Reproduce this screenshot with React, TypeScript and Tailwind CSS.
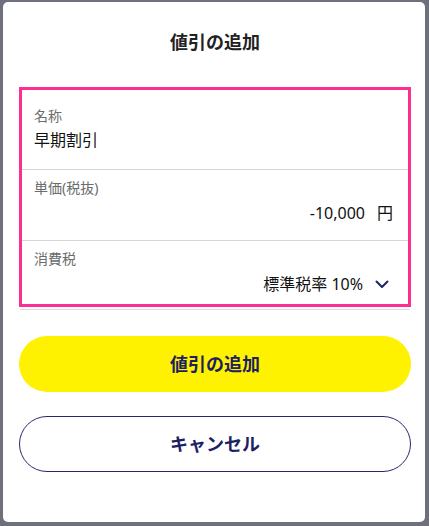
import React from "react";

export default function App() {
  const font = { fontFamily: '"Noto Sans", "Noto Sans CJK JP", sans-serif' };
  return (
    <div className="w-[429px] h-[526px] bg-[#6e717c] pt-[2px] overflow-hidden" style={font}>
      <div className="ml-[3px] w-[422px] h-[520px] bg-white rounded-[5px] pl-4 pr-[14px] flex flex-col">
        <h1 className="pt-[26px] text-center text-[18px] leading-[28px] font-bold text-[#222]">値引の追加</h1>
        <div className="mt-[31px] border-[3px] border-[#fb2e94] flex flex-col">
          <div className="pl-3 pr-[15px] pt-4 pb-[17px] flex flex-col">
            <span className="text-[14px] leading-[20px] text-[#6b6b6b]">名称</span>
            <span className="mt-[2px] text-[16px] leading-[24px] text-[#111]">早期割引</span>
          </div>
          <div className="h-px bg-[#d6d6d6]" />
          <div className="pl-3 pr-[15px] pt-2 pb-[15px] flex flex-col">
            <span className="text-[14px] leading-[20px] text-[#6b6b6b]">単価(税抜)</span>
            <div className="mt-[3px] flex justify-end items-center text-[16px] leading-[24px] text-[#111]">
              <span>-10,000</span>
              <span className="ml-3">円</span>
            </div>
          </div>
          <div className="h-px bg-[#d6d6d6]" />
          <div className="pl-3 pr-[19px] pt-2 pb-2 flex flex-col">
            <span className="text-[14px] leading-[20px] text-[#6b6b6b]">消費税</span>
            <div className="mt-[3px] flex justify-end items-center text-[16px] leading-[24px] text-[#111]">
              <span>標準税率 10%</span>
              <svg className="ml-3" width="14" height="9" viewBox="0 0 14 9" fill="none">
                <polyline points="1.5,1.5 7,7 12.5,1.5" stroke="#1f2463" strokeWidth="2" strokeLinecap="round" strokeLinejoin="round" />
              </svg>
            </div>
          </div>
        </div>
        <div className="mt-[2px] mx-[1px] h-px bg-[#dcdcdc]" />
        <button className="mt-[26px] h-[56px] rounded-full bg-[#fff200] text-[18px] font-bold text-[#1c2163]">値引の追加</button>
        <button className="mt-6 h-[56px] rounded-full border border-[#262a6a] bg-white text-[18px] font-bold text-[#1c2163]">キャンセル</button>
      </div>
    </div>
  );
}
